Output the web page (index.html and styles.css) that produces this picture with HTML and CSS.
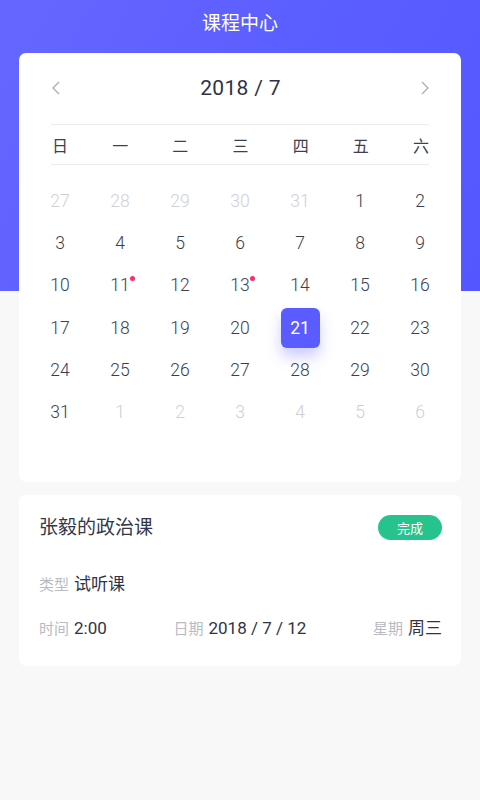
FILE: index.html
```html
<!DOCTYPE html>
<html lang="zh">
<head>
<meta charset="utf-8">
<link rel="stylesheet" href="styles.css">
</head>
<body>
<div class="page">
  <div class="hero"></div>
  <header class="topbar">课程中心</header>
  <main class="content">
    <section class="card calendar">
      <div class="cal-head">
        <svg class="arrow" width="12" height="16" viewBox="0 0 12 16"><path d="M9 2 L3 8 L9 14" fill="none" stroke="#a9acb8" stroke-width="1.3"/></svg>
        <div class="month">2018 / 7</div>
        <svg class="arrow" width="12" height="16" viewBox="0 0 12 16"><path d="M3 2 L9 8 L3 14" fill="none" stroke="#a9acb8" stroke-width="1.3"/></svg>
      </div>
      <div class="weekdays">
        <span>日</span><span>一</span><span>二</span><span>三</span><span>四</span><span>五</span><span>六</span>
      </div>
      <div class="days">
        <span class="muted">27</span><span class="muted">28</span><span class="muted">29</span><span class="muted">30</span><span class="muted">31</span><span>1</span><span>2</span>
        <span>3</span><span>4</span><span>5</span><span>6</span><span>7</span><span>8</span><span>9</span>
        <span>10</span><span class="dot">11</span><span>12</span><span class="dot">13</span><span>14</span><span>15</span><span>16</span>
        <span>17</span><span>18</span><span>19</span><span>20</span><span class="sel"><b>21</b></span><span>22</span><span>23</span>
        <span>24</span><span>25</span><span>26</span><span>27</span><span>28</span><span>29</span><span>30</span>
        <span>31</span><span class="muted">1</span><span class="muted">2</span><span class="muted">3</span><span class="muted">4</span><span class="muted">5</span><span class="muted">6</span>
      </div>
    </section>
    <section class="card course">
      <div class="course-head">
        <h2 class="course-title">张毅的政治课</h2>
        <span class="badge">完成</span>
      </div>
      <div class="row">
        <span class="item"><span class="label">类型</span><span class="value">试听课</span></span>
      </div>
      <div class="row spread">
        <span class="item"><span class="label">时间</span><span class="value">2:00</span></span>
        <span class="item"><span class="label">日期</span><span class="value">2018 / 7 / 12</span></span>
        <span class="item"><span class="label">星期</span><span class="value">周三</span></span>
      </div>
    </section>
  </main>
</div>
</body>
</html>
```
FILE: styles.css
```css
* { box-sizing: border-box; margin: 0; padding: 0; }
html, body { width: 480px; height: 800px; }
body {
  background: #f8f8f8;
  font-family: Roboto, "Noto Sans CJK SC", sans-serif;
  color: #343849;
  overflow: hidden;
}
.page { position: relative; width: 480px; height: 800px; }
.hero {
  position: absolute;
  left: 0; top: 0;
  width: 480px; height: 291px;
  background: linear-gradient(120deg, #6467ff 0%, #5a5dff 60%, #5457ff 100%);
}
.topbar {
  position: relative;
  height: 53px;
  padding-top: 9px;
  text-align: center;
  color: #fff;
  font-family: "Noto Sans CJK SC", sans-serif;
  font-size: 19px;
  line-height: 26px;
}
.content {
  position: relative;
  padding: 0 19px;
  display: flex;
  flex-direction: column;
  gap: 13px;
}
.card {
  background: #fff;
  border-radius: 7px;
}
.calendar { height: 429px; padding-top: 20px; }
.cal-head {
  display: flex;
  align-items: center;
  justify-content: space-between;
  padding: 0 30px 0 31px;
  height: 30px;
}
.month {
  font-size: 21px;
  font-weight: 400;
  color: #2f3346;
  letter-spacing: 0.3px;
}
.weekdays {
  margin: 21px 32px 0;
  border-top: 1px solid #ebebef;
  border-bottom: 1px solid #ebebef;
  height: 41px;
  display: flex;
  justify-content: space-between;
  align-items: center;
  padding: 0 0 0 1px;
  font-family: "Noto Sans CJK SC", sans-serif;
  font-size: 16px;
  color: #3c4052;
}
.days {
  margin: 15px 11px 0;
  display: grid;
  grid-template-columns: repeat(7, 60px);
  grid-auto-rows: 42.2px;
}
.days span {
  position: relative;
  display: flex;
  align-items: center;
  justify-content: center;
  font-size: 17.5px;
  font-weight: 300;
  color: #3a3e50;
}
.days span.muted { color: #cfd0d5; }
.days span.dot::after {
  content: "";
  position: absolute;
  width: 5px; height: 5px;
  border-radius: 50%;
  background: #ff2d62;
  left: 50%;
  top: 12px;
  margin-left: 10px;
}
.days span.sel b {
  display: flex;
  align-items: center;
  justify-content: center;
  width: 39px;
  height: 40px;
  border-radius: 6px;
  background: #5a5cff;
  color: #fff;
  font-weight: 400;
  box-shadow: 0 9px 14px rgba(90, 92, 255, 0.3);
}
.course { height: 171px; padding: 18px 19px 0 20px; }
.course-head {
  display: flex;
  justify-content: space-between;
  align-items: center;
  height: 25px;
}
.course-title {
  font-family: "Noto Sans CJK SC", sans-serif;
  font-weight: 400;
  font-size: 19px;
  color: #343849;
}
.badge {
  background: #26c48c;
  color: #fff;
  font-family: "Noto Sans CJK SC", sans-serif;
  font-size: 13px;
  width: 64px;
  height: 25px;
  border-radius: 13px;
  display: flex;
  align-items: center;
  justify-content: center;
  margin-top: 3px;
}
.row {
  display: flex;
  align-items: baseline;
  margin-top: 32px;
  height: 20px;
}
.row + .row { margin-top: 24px; }
.row.spread { justify-content: space-between; }
.item { display: flex; align-items: baseline; gap: 5px; }
.label {
  font-family: "Noto Sans CJK SC", sans-serif;
  font-size: 15px;
  color: #b9bbc3;
}
.value {
  font-family: Roboto, "Noto Sans CJK SC", sans-serif;
  font-size: 17px;
  color: #2f3346;
}
```
